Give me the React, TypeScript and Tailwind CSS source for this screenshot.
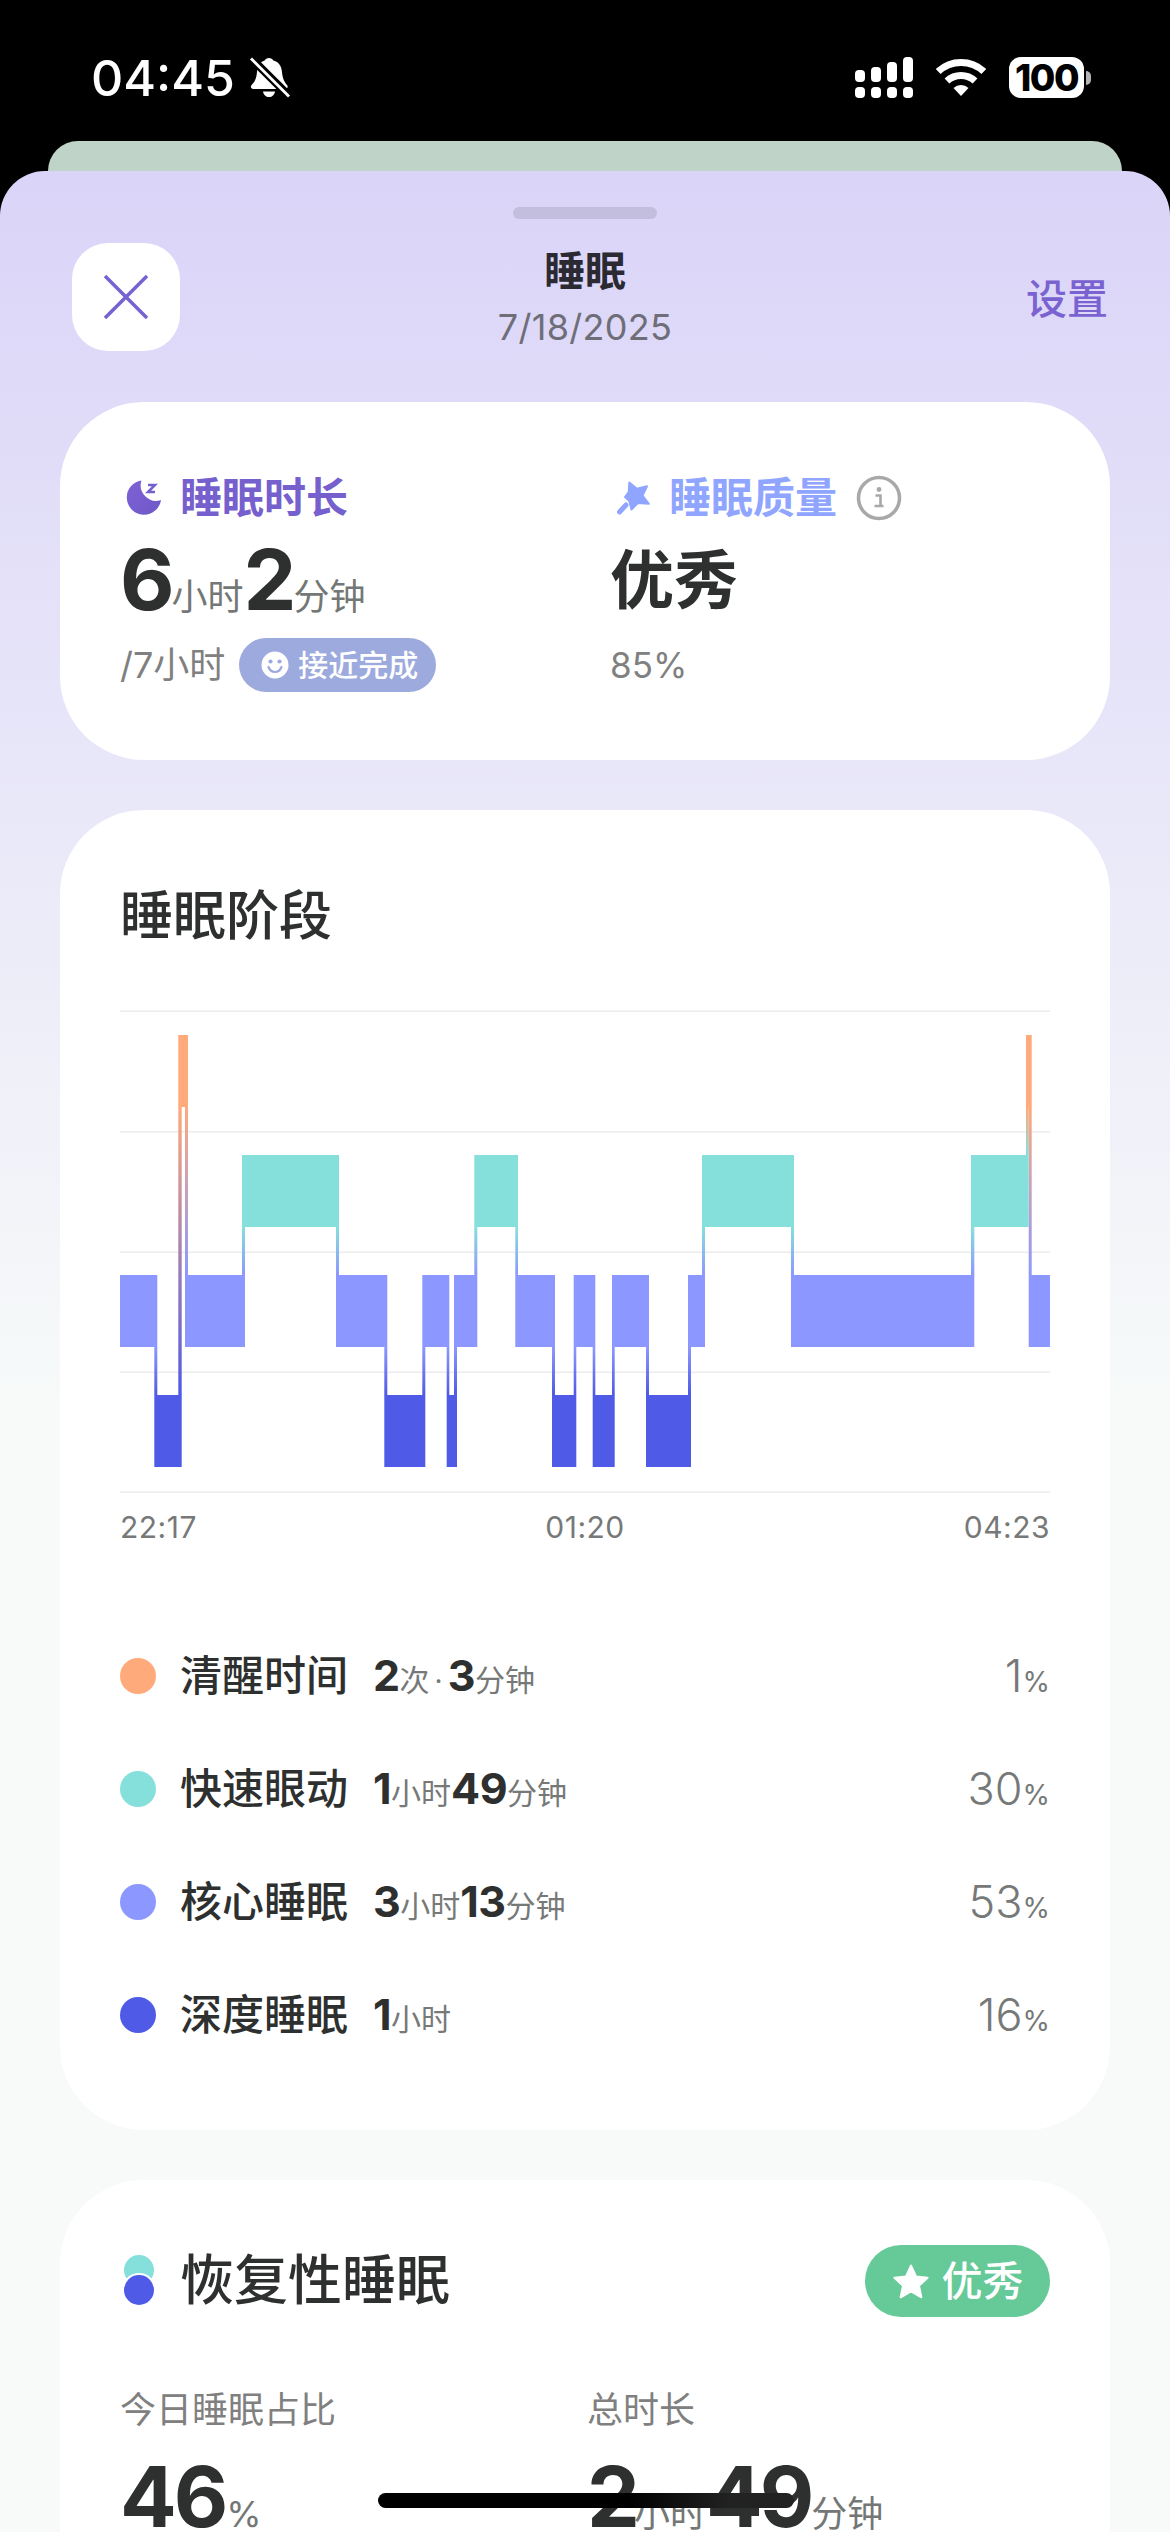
import React from "react";

const COLORS: Record<string, string> = {
  awake: "#ffaa7b",
  rem: "#85e0dc",
  core: "#8c98ff",
  deep: "#4f5ae6",
};
const TOP: Record<string, number> = { awake: 1035, rem: 1155, core: 1275, deep: 1395 };
const H = 72;

const SEGMENTS: [string, number, number][] = [
  ["core", 120, 157.3],
  ["deep", 154.3, 181.7],
  ["awake", 178.3, 188],
  ["core", 185, 245],
  ["rem", 242, 339],
  ["core", 336, 387.3],
  ["deep", 384.3, 425.3],
  ["core", 422.3, 449.3],
  ["deep", 446.7, 457],
  ["core", 454, 477.3],
  ["rem", 474.3, 518],
  ["core", 515.3, 555],
  ["deep", 552, 576.3],
  ["core", 573.7, 595.3],
  ["deep", 592.7, 614.7],
  ["core", 612, 649],
  ["deep", 646, 691],
  ["core", 688, 705],
  ["rem", 702, 794],
  ["core", 791, 974.3],
  ["rem", 971, 1028.7],
  ["awake", 1026, 1031.7],
  ["core", 1028.7, 1050],
];

function Chart() {
  const grid = [1011, 1131.5, 1252, 1372, 1492];
  return (
    <svg viewBox="120 1010 930 483" width="930" height="483" className="block">
      <defs>
        {SEGMENTS.slice(0, -1).map((s, i) => {
          const n = SEGMENTS[i + 1];
          const down = TOP[s[0]] < TOP[n[0]];
          const y1 = down ? TOP[s[0]] + H : TOP[n[0]] + H;
          const y2 = down ? TOP[n[0]] : TOP[s[0]];
          return (
            <linearGradient key={i} id={`c${i}`} gradientUnits="userSpaceOnUse" x1="0" x2="0" y1={y1} y2={y2}>
              <stop offset="0" stopColor={COLORS[down ? s[0] : n[0]]} />
              <stop offset="1" stopColor={COLORS[down ? n[0] : s[0]]} />
            </linearGradient>
          );
        })}
      </defs>
      {grid.map((y) => (
        <rect key={y} x="120" y={y - 0.5} width="930" height="1.5" fill="#ececec" />
      ))}
      {SEGMENTS.slice(0, -1).map((s, i) => {
        const n = SEGMENTS[i + 1];
        const down = TOP[s[0]] < TOP[n[0]];
        const y1 = down ? TOP[s[0]] + H : TOP[n[0]] + H;
        const y2 = down ? TOP[n[0]] : TOP[s[0]];
        return <rect key={i} x={n[1]} y={y1} width={s[2] - n[1]} height={y2 - y1} fill={`url(#c${i})`} />;
      })}
      {SEGMENTS.map((s, i) => (
        <rect key={i} x={s[1]} y={TOP[s[0]]} width={s[2] - s[1]} height={H} fill={COLORS[s[0]]} />
      ))}
    </svg>
  );
}

function BellSlash() {
  return (
    <svg width="40" height="42" viewBox="0 0 40 42" className="block">
      <path
        d="M19 1c2 0 3.500 1.200 4.400 2.600C29 5 31.500 9.500 32 15c.5 6 2 9.500 5 13 1.400 1.700.5 4-1.800 4H3.500C1 32 0 29.700 1.600 28 5 24.500 6.500 21 7 15 7.500 9.500 10 5 14.600 3.600 15.500 2.200 17 1 19 1z"
        fill="#fff"
      />
      <path d="M13 34.500h12c-.5 3.500-3 5.500-6 5.500s-5.500-2-6-5.500z" fill="#fff" />
      <path d="M1 1l38 38" stroke="#000" strokeWidth="8" />
      <path d="M1 1.500l38 38" stroke="#fff" strokeWidth="2.800" />
    </svg>
  );
}

function Signal() {
  return (
    <div className="flex gap-[6px] items-end">
      {["h-[12px]", "h-[15px]", "h-[20px]", "h-[25px]"].map((h, i) => (
        <div key={i} className="flex flex-col gap-[5px] w-[10px]">
          <div className={`${h} w-[10px] rounded-[4px] bg-white`} />
          <div className="h-[11px] w-[10px] rounded-[4px] bg-white" />
        </div>
      ))}
    </div>
  );
}

function Wifi() {
  return (
    <svg width="50" height="37" viewBox="0 0 50 37" className="block">
      <path d="M2.200 12.500A33.500 33.500 0 0 1 47.800 12.500" stroke="#fff" strokeWidth="7" fill="none" />
      <path d="M11 22A20.500 20.500 0 0 1 39 22" stroke="#fff" strokeWidth="7" fill="none" />
      <path d="M25 37L17.500 29A11 11 0 0 1 32.500 29Z" fill="#fff" />
    </svg>
  );
}

function MoonIcon() {
  return (
    <svg width="36" height="36" viewBox="0 0 36 36" className="block">
      <defs>
        <linearGradient id="moon" x1="0" y1="0" x2="1" y2="1">
          <stop offset="0" stopColor="#7d62d6" />
          <stop offset="1" stopColor="#7058c8" />
        </linearGradient>
      </defs>
      <path d="M15.500 .5A17.200 17.200 0 1 0 35 20A15.500 15.500 0 0 1 15.500 .5Z" fill="url(#moon)" />
      <path d="M22 5h7l-7 7h7" stroke="#7560ce" strokeWidth="2.500" fill="none" />
    </svg>
  );
}

function WandStar() {
  return (
    <svg width="34" height="34" viewBox="0 0 34 34" className="block">
      <path
        d="M12.300 1.500L19.900 7.700 30 5.200 25.500 14.500 31.800 22.800 20.800 22 14.500 28.500 12.200 19.800 8 16 11.700 11Z"
        fill="#8fa5ff"
        stroke="#8fa5ff"
        strokeWidth="2"
        strokeLinejoin="round"
      />
      <path d="M2.500 31L9 24" stroke="#8fa5ff" strokeWidth="5" strokeLinecap="round" />
    </svg>
  );
}

function InfoIcon() {
  return (
    <svg width="46" height="46" viewBox="0 0 46 46" className="block">
      <circle cx="23" cy="23" r="20.500" fill="none" stroke="#a8a8a8" strokeWidth="3.500" />
      <circle cx="23" cy="14.500" r="2.400" fill="#a8a8a8" />
      <path d="M19.500 20.500h5v10.500h3M18.500 31h9" stroke="#a8a8a8" strokeWidth="2.600" fill="none" />
    </svg>
  );
}

function Smile() {
  return (
    <svg width="28" height="28" viewBox="0 0 28 28" className="block shrink-0">
      <circle cx="14" cy="14" r="13.500" fill="#fff" />
      <circle cx="9.500" cy="10.500" r="2.100" fill="#9daadd" />
      <circle cx="18.500" cy="10.500" r="2.100" fill="#9daadd" />
      <path d="M7.500 16c1.200 3.200 3.700 5 6.500 5s5.300-1.800 6.500-5" stroke="#9daadd" strokeWidth="2.200" fill="none" strokeLinecap="round" />
    </svg>
  );
}

function Big({ children }: { children: React.ReactNode }) {
  return <span className="text-[84px] font-bold leading-none tracking-[-3px] text-[#2e302f]">{children}</span>;
}
function Unit({ children }: { children: React.ReactNode }) {
  return <span className="text-[36px] leading-none text-[#737775]">{children}</span>;
}
function V({ children }: { children: React.ReactNode }) {
  return <span className="text-[43px] font-bold leading-none tracking-[-0.5px] text-[#2e302f]">{children}</span>;
}
function U({ children }: { children: React.ReactNode }) {
  return <span className="text-[30px] leading-none text-[#767978]">{children}</span>;
}

const LEGEND = [
  {
    color: "bg-[#ffaa7b]",
    label: "清醒时间",
    value: (
      <>
        <V>2</V>
        <U>次</U>
        <span className="mx-[5px] text-[28px] leading-none text-[#767978]">·</span>
        <V>3</V>
        <U>分钟</U>
      </>
    ),
    pct: "1",
  },
  {
    color: "bg-[#85e0dc]",
    label: "快速眼动",
    value: (
      <>
        <V>1</V>
        <U>小时</U>
        <V>49</V>
        <U>分钟</U>
      </>
    ),
    pct: "30",
  },
  {
    color: "bg-[#8c98ff]",
    label: "核心睡眠",
    value: (
      <>
        <V>3</V>
        <U>小时</U>
        <V>13</V>
        <U>分钟</U>
      </>
    ),
    pct: "53",
  },
  {
    color: "bg-[#4f5ae6]",
    label: "深度睡眠",
    value: (
      <>
        <V>1</V>
        <U>小时</U>
      </>
    ),
    pct: "16",
  },
];

export default function App() {
  return (
    <div
      lang="zh-CN"
      className="relative h-[2532px] w-[1170px] overflow-hidden bg-black font-[Inter,'Noto_Sans_CJK_SC',sans-serif]"
    >
      {/* status bar */}
      <div className="flex h-[141px] items-start justify-between pl-[91px] pr-[79px] pt-[57px]">
        <div className="flex items-center gap-[15px]">
          <span className="text-[50px] font-medium leading-[42px] text-white">04:45</span>
          <BellSlash />
        </div>
        <div className="flex items-center gap-[23px]">
          <Signal />
          <Wifi />
          <div className="flex items-center gap-[2px]">
            <div className="flex h-[41px] w-[75px] items-center justify-center rounded-[12px] bg-white text-[37px] font-extrabold leading-none tracking-[-1.5px] text-black">
              100
            </div>
            <div className="h-[14px] w-[5px] rounded-r-full bg-white/70" />
          </div>
        </div>
      </div>

      {/* card behind */}
      <div className="mx-[48px] h-[30px] rounded-t-[30px] bg-[#bfd3c9]" />

      {/* sheet */}
      <div className="h-[2361px] overflow-hidden rounded-t-[45px] bg-[linear-gradient(180deg,#dad4f8_0px,#f7faf9_1230px)]">
        <div className="mx-auto mt-[36px] h-[12px] w-[144px] rounded-[6px] bg-[#c3bede]" />

        <div className="mt-[24px] grid h-[108px] grid-cols-[1fr_auto_1fr] px-[65px]">
          <div className="ml-[7px] flex h-[108px] w-[108px] items-center justify-center rounded-[36px] bg-white">
            <svg width="44" height="44" viewBox="0 0 44 44" className="block">
              <path d="M1 1l42 42M43 1L1 43" stroke="#7662d3" strokeWidth="3.500" />
            </svg>
          </div>
          <div className="flex flex-col items-center pt-[6px]">
            <span className="text-[41px] font-semibold leading-[44px] text-[#2b2a33]">睡眠</span>
            <span className="mt-[12px] text-[36px] leading-[44px] tracking-[0.3px] text-[#6f6e78]">7/18/2025</span>
          </div>
          <div className="flex justify-end pt-[31px]">
            <span className="-mr-[3px] text-[41px] font-medium leading-[50px] text-[#7a62d0]">设置</span>
          </div>
        </div>

        <div className="mt-[51px] flex flex-col gap-[50px] px-[60px]">
          {/* summary card */}
          <div className="flex h-[358px] rounded-[84px] bg-white pl-[60px] pt-[70px]">
            <div className="w-[490px]">
              <div className="flex h-[52px] items-center">
                <div className="ml-[6px]">
                  <MoonIcon />
                </div>
                <span className="ml-[18px] text-[42px] font-semibold leading-[52px] text-[#7560ce]">睡眠时长</span>
              </div>
              <div className="mt-[14px] flex h-[84px] items-baseline">
                <Big>6</Big>
                <Unit>小时</Unit>
                <Big>2</Big>
                <Unit>分钟</Unit>
              </div>
              <div className="mt-[16px] flex items-center">
                <span className="text-[36px] leading-[54px] text-[#808080]">/7小时</span>
                <div className="ml-[14px] flex h-[54px] w-[197px] items-center rounded-full bg-[#9daadd] pl-[22px]">
                  <Smile />
                  <span className="ml-[9px] text-[30px] font-medium leading-none text-white">接近完成</span>
                </div>
              </div>
            </div>
            <div>
              <div className="flex h-[52px] items-center">
                <div className="ml-[7px]">
                  <WandStar />
                </div>
                <span className="ml-[18px] text-[42px] font-semibold leading-[52px] text-[#8fa5ff]">睡眠质量</span>
                <div className="ml-[19px]">
                  <InfoIcon />
                </div>
              </div>
              <div className="mt-[14px] h-[84px] text-[64px] font-semibold leading-[84px] text-[#2e302f]">优秀</div>
              <div className="mt-[16px] text-[35px] leading-[54px] text-[#808080]">85%</div>
            </div>
          </div>

          {/* stages card */}
          <div className="h-[1320px] rounded-[84px] bg-white px-[60px] pt-[75px]">
            <div className="text-[53px] font-medium leading-[62px] text-[#2e302f]">睡眠阶段</div>
            <div className="mt-[63px]">
              <Chart />
            </div>
            <div className="mt-[17px] grid grid-cols-3 text-[30px] leading-[34px] tracking-[0.5px] text-[#767978]">
              <span>22:17</span>
              <span className="text-center">01:20</span>
              <span className="text-right">04:23</span>
            </div>
            <div className="mt-[75px] flex flex-col">
              {LEGEND.map((row) => (
                <div key={row.label} className="flex h-[113px] items-center">
                  <div className={`h-[36px] w-[36px] rounded-full ${row.color}`} />
                  <span className="ml-[24px] w-[193px] text-[42px] font-medium leading-none text-[#2e302f]">
                    {row.label}
                  </span>
                  <div className="flex items-baseline">{row.value}</div>
                  <div className="ml-auto flex items-baseline">
                    <span className="text-[45px] font-light leading-none text-[#767978]">{row.pct}</span>
                    <span className="text-[28px] leading-none text-[#767978]">%</span>
                  </div>
                </div>
              ))}
            </div>
          </div>

          {/* restorative card */}
          <div className="h-[500px] rounded-[84px] bg-white px-[60px] pt-[65px]">
            <div className="flex h-[72px] items-center justify-between">
              <div className="flex items-center">
                <svg width="32" height="52" viewBox="0 0 32 52" className="ml-[3px] block">
                  <circle cx="16" cy="15" r="15" fill="#85e0dc" />
                  <circle cx="16" cy="35" r="17" fill="#fff" />
                  <circle cx="16" cy="35" r="15" fill="#4f5ae6" />
                </svg>
                <span className="ml-[25px] text-[54px] font-medium leading-none text-[#2e302f]">恢复性睡眠</span>
              </div>
              <div className="flex h-[72px] w-[185px] items-center justify-center gap-[12px] rounded-full bg-[#66c998]">
                <svg width="38" height="37" viewBox="0 0 36 35" className="block">
                  <path
                    d="M18 2.500l4.700 10.200 11 1.200-8.200 7.500 2.300 11L18 26.900 8.200 32.400l2.300-11L2.300 13.900l11-1.200z"
                    fill="#fff"
                    stroke="#fff"
                    strokeWidth="2"
                    strokeLinejoin="round"
                  />
                </svg>
                <span className="text-[41px] font-medium leading-none text-white">优秀</span>
              </div>
            </div>
            <div className="mt-[72px] flex text-[36px] leading-[42px] text-[#808080]">
              <span className="w-[467px]">今日睡眠占比</span>
              <span>总时长</span>
            </div>
            <div className="mt-[24px] flex items-baseline">
              <div className="flex w-[467px] items-baseline">
                <Big>46</Big>
                <span className="ml-[1px] text-[36px] leading-none text-[#737775]">%</span>
              </div>
              <Big>2</Big>
              <span className="-ml-[3px]">
                <Unit>小时</Unit>
              </span>
              <Big>49</Big>
              <Unit>分钟</Unit>
            </div>
          </div>
        </div>
      </div>

      {/* home indicator */}
      <div className="absolute left-[378px] top-[2493px] h-[15px] w-[416px] rounded-full bg-[linear-gradient(90deg,#000_0%,#000_60%,#222_85%,#222_100%)]" />
    </div>
  );
}
